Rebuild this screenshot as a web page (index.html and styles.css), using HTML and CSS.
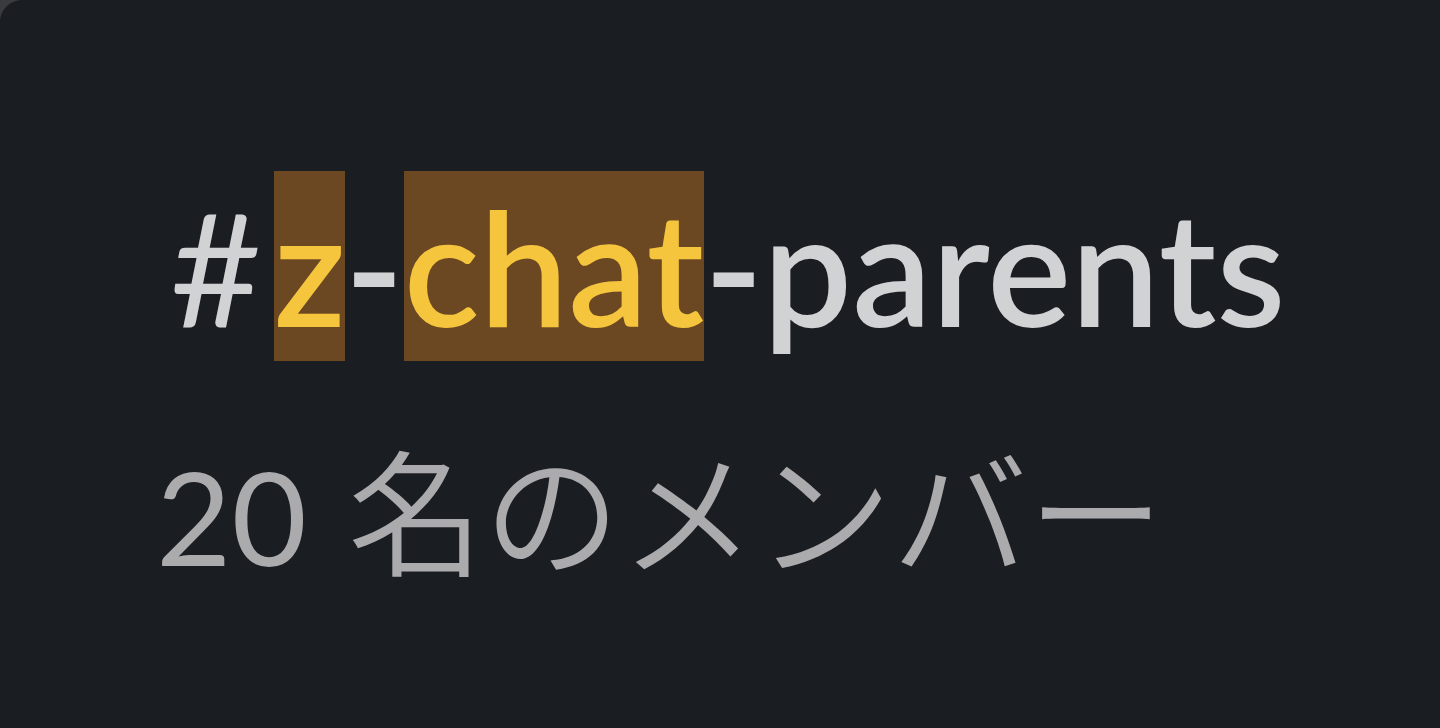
FILE: index.html
```html
<!DOCTYPE html>
<html lang="ja">
<head>
<meta charset="utf-8">
<title>#z-chat-parents</title>
<link rel="stylesheet" href="styles.css">
</head>
<body>
<div class="panel">
  <div class="channel-name"><span class="hash">#</span><mark class="hit">z</mark>-<mark class="hit">chat</mark>-parents</div>
  <div class="member-count">20 <span class="jp">名のメンバー</span></div>
</div>
</body>
</html>
```

FILE: styles.css
```css
html, body {
  margin: 0;
  padding: 0;
  width: 1440px;
  height: 728px;
  overflow: hidden;
  background: #3a3b3e;
}

.panel {
  box-sizing: border-box;
  width: 1440px;
  height: 728px;
  background: #1a1d21;
  border-top-left-radius: 22px;
  padding: 172px 0 0 160px;
  font-family: Lato, "Noto Sans CJK JP", sans-serif;
}

.channel-name {
  font-size: 158px;
  font-weight: 600;
  line-height: 1.2;
  color: #d1d2d3;
  padding-left: 10px;
  white-space: nowrap;
}

.hash {
  font-weight: 400;
  margin-right: 12px;
}

.hit {
  background: #6b4722;
  color: #f5c53e;
}

.member-count {
  margin-top: 69px;
  margin-left: -4px;
  font-size: 130px;
  font-weight: 400;
  line-height: 166px;
  color: #ababad;
  white-space: nowrap;
}

.jp {
  margin-left: 8px;
  font-size: 136px;
  font-weight: 350;
}
```
